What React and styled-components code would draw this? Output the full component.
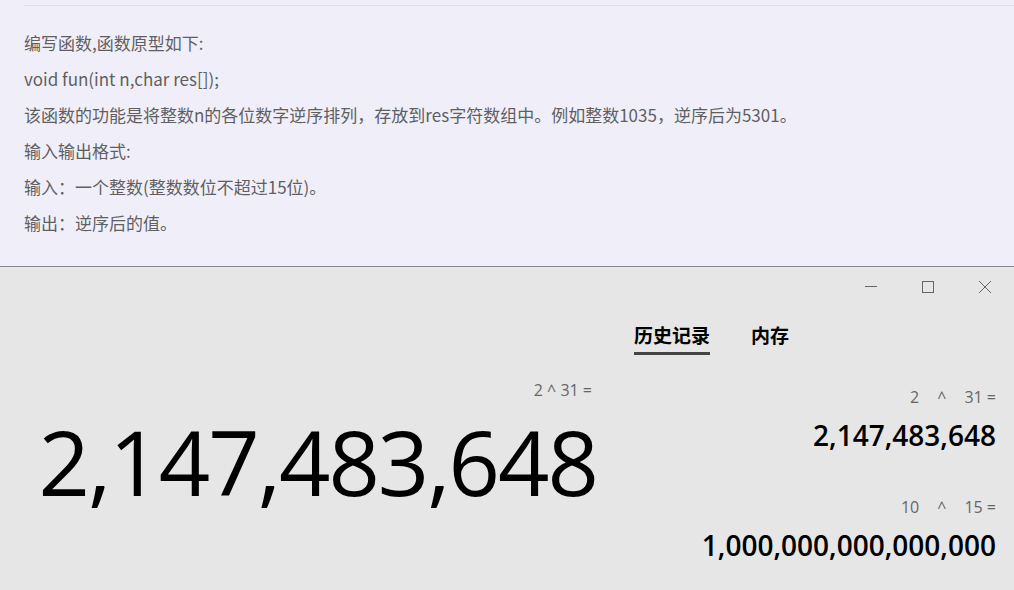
import React from "react";
import styled, { createGlobalStyle } from "styled-components";

const GlobalStyle = createGlobalStyle`
  html, body {
    margin: 0;
    padding: 0;
    width: 1014px;
    height: 590px;
    overflow: hidden;
  }
  body {
    font-family: "Open Sans", "Noto Sans", "Noto Sans CJK SC", sans-serif;
  }
`;

const lines = [
  "编写函数,函数原型如下:",
  "void fun(int n,char res[]);",
  "该函数的功能是将整数n的各位数字逆序排列，存放到res字符数组中。例如整数1035，逆序后为5301。",
  "输入输出格式:",
  "输入：一个整数(整数数位不超过15位)。",
  "输出：逆序后的值。",
];

const history = [
  { expr: ["2", "^", "31 ="], value: "2,147,483,648" },
  { expr: ["10", "^", "15 ="], value: "1,000,000,000,000,000" },
];

const App = () => {
  return (
    <Page>
      <GlobalStyle />
      <Problem>
        <TopRule />
        <Lines>
          {lines.map((l, i) => (
            <Line key={i}>{l}</Line>
          ))}
        </Lines>
      </Problem>
      <Calc>
        <TitleBar>
          <WinButton>
            <svg width="12" height="12" viewBox="0 0 12 12">
              <line x1="0" y1="5.5" x2="12" y2="5.5" stroke="#666" strokeWidth="1" />
            </svg>
          </WinButton>
          <WinButton>
            <svg width="12" height="12" viewBox="0 0 12 12">
              <rect x="0.5" y="0.5" width="11" height="11" fill="none" stroke="#666" strokeWidth="1" />
            </svg>
          </WinButton>
          <WinButton>
            <svg width="12" height="12" viewBox="0 0 12 12">
              <path d="M0 0 L12 12 M12 0 L0 12" stroke="#666" strokeWidth="1" />
            </svg>
          </WinButton>
        </TitleBar>
        <Body>
          <Display>
            <Expr>2 ^ 31 =</Expr>
            <Result>2,147,483,648</Result>
          </Display>
          <Side>
            <Tabs>
              <Tab active>历史记录</Tab>
              <Tab>内存</Tab>
            </Tabs>
            <HistoryList>
              {history.map((h, i) => (
                <HistoryItem key={i}>
                  <HistoryExpr>
                    {h.expr.map((p, j) => (
                      <span key={j}>{p}</span>
                    ))}
                  </HistoryExpr>
                  <HistoryValue>{h.value}</HistoryValue>
                </HistoryItem>
              ))}
            </HistoryList>
          </Side>
        </Body>
      </Calc>
    </Page>
  );
};

const Page = styled.div`
  width: 1014px;
  height: 590px;
  display: flex;
  flex-direction: column;
`;

const Problem = styled.div`
  height: 267px;
  background: #f0eff9;
  border-bottom: 1px solid #8a8a8c;
  padding-left: 24px;
  box-sizing: border-box;
  padding-top: 5px;
`;

const TopRule = styled.div`
  height: 1px;
  background: #e2e1ea;
`;

const Lines = styled.div`
  display: flex;
  flex-direction: column;
  padding-top: 19px;
`;

const Line = styled.div`
  font-family: "Microsoft YaHei", "Noto Sans CJK SC", sans-serif;
  font-size: 17px;
  line-height: 36px;
  color: #5f5f63;
`;

const Calc = styled.div`
  flex: 1;
  background: #e6e6e6;
  display: flex;
  flex-direction: column;
`;

const TitleBar = styled.div`
  display: flex;
  justify-content: flex-end;
  padding: 14px 23px 0 0;
  gap: 45px;
`;

const WinButton = styled.div`
  width: 12px;
  height: 12px;
  display: flex;
`;

const Body = styled.div`
  display: flex;
  flex: 1;
`;

const Display = styled.div`
  width: 597px;
  display: flex;
  flex-direction: column;
  align-items: flex-end;
  padding-top: 87px;
`;

const Expr = styled.div`
  font-family: "Open Sans", "Noto Sans", sans-serif;
  font-size: 16px;
  color: #666;
  padding-right: 5px;
  line-height: 20px;
`;

const Result = styled.div`
  font-family: "Open Sans", "Noto Sans", sans-serif;
  font-size: 90px;
  font-weight: 500;
  color: #000;
  line-height: 100px;
  margin-top: 11px;
  letter-spacing: -2px;
`;

const Side = styled.div`
  flex: 1;
  display: flex;
  flex-direction: column;
  padding-right: 18px;
`;

const Tabs = styled.div`
  display: flex;
  gap: 41px;
  padding-left: 37px;
  padding-top: 29px;
`;

const Tab = styled.div`
  font-family: "Noto Sans CJK SC", sans-serif;
  font-size: 19px;
  font-weight: 700;
  color: #000;
  line-height: 26px;
  padding-bottom: 4px;
  border-bottom: 3px solid ${(p) => (p.active ? "#444" : "transparent")};
`;

const HistoryList = styled.div`
  display: flex;
  flex-direction: column;
  align-items: flex-end;
  padding-top: 32px;
  gap: 44px;
`;

const HistoryItem = styled.div`
  display: flex;
  flex-direction: column;
  align-items: flex-end;
`;

const HistoryExpr = styled.div`
  display: flex;
  gap: 18px;
  font-family: "Open Sans", "Noto Sans", sans-serif;
  font-size: 16px;
  color: #666;
  line-height: 20px;
  white-space: pre;
`;

const HistoryValue = styled.div`
  font-family: "Open Sans", "Noto Sans", sans-serif;
  font-size: 28px;
  font-weight: 600;
  color: #000;
  line-height: 36px;
  margin-top: 10px;
`;

export default App;
